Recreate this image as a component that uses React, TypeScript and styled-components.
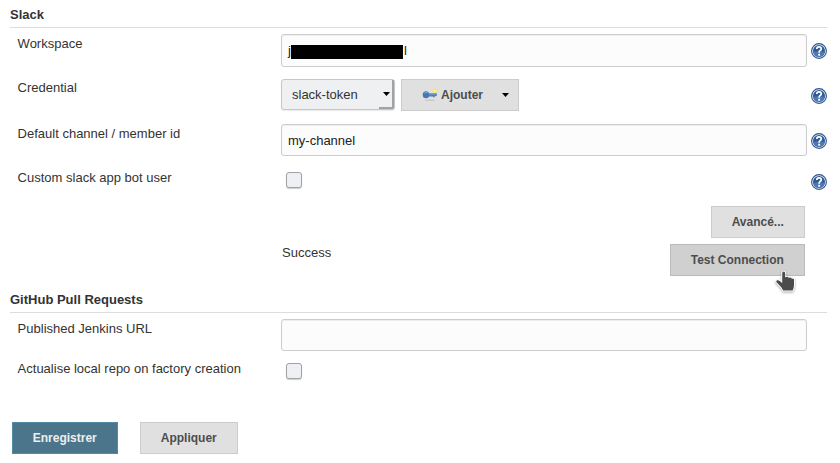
import React from 'react';
import styled, { createGlobalStyle } from 'styled-components';

const GlobalStyle = createGlobalStyle`
  * { box-sizing: border-box; }
  body {
    margin: 0;
    background: #fff;
    color: #333;
    font: 13px/16px "Liberation Sans", Arial, sans-serif;
  }
`;

const Page = styled.form`
  width: 840px;
  height: 463px;
  padding: 0 13px 0 10px;
  overflow: hidden;
`;

const Section = styled.fieldset<{ $height: number }>`
  margin: 0;
  padding: 0;
  border: 0;
  min-width: 0;
  height: ${(p) => p.$height}px;
`;

const SectionTitle = styled.h2`
  margin: 0 0 6px;
  height: 28px;
  padding-top: 7px;
  border-bottom: 1px solid #ddd;
  font-size: 13px;
  line-height: 16px;
  font-weight: bold;
`;

const Row = styled.div<{ $height: number }>`
  display: grid;
  grid-template-columns: 263px 526px 16px;
  column-gap: 0;
  align-items: start;
  padding-left: 8px;
  height: ${(p) => p.$height}px;
`;

const Label = styled.label<{ $drop?: number }>`
  padding-top: ${(p) => p.$drop ?? 1}px;
  margin-left: -0.4px;
`;

const InputBox = styled.div<{ $height?: number }>`
  display: flex;
  align-items: center;
  height: ${(p) => p.$height ?? 32}px;
  padding: 0 6px;
  border: 1px solid #ccc;
  border-radius: 3px;
  background: #fcfcfc;
  color: #222;
  box-shadow: inset 0 1px 1px rgba(0, 0, 0, 0.06);
`;

const TextInput = styled.input`
  width: 100%;
  padding: 2px 0 0;
  border: 0;
  outline: 0;
  background: transparent;
  color: #222;
  font: inherit;
`;

const Redacted = styled.span`
  width: 112px;
  height: 14px;
  margin: 2px 1px 0 0;
  background: #000;
`;

const Controls = styled.div`
  display: flex;
  align-items: flex-start;
  gap: 6px;
`;

const SelectBox = styled.div`
  display: flex;
  width: 114px;
  height: 31px;
  border: 1px solid #c4c6c8;
  border-radius: 3px;
  background: #eef0f2;
  box-shadow: 0 1px 1px rgba(0, 0, 0, 0.08);
`;

const SelectValue = styled.span`
  width: 97px;
  padding: 7px 0 0 10px;
`;

const SelectArrow = styled.span`
  display: flex;
  flex: 1;
  padding: 12px 0 0 4px;
  border-right: 2px solid #a0a3a5;
  border-bottom: 2px solid #a0a3a5;
  border-bottom-right-radius: 2px;
`;

const Button = styled.button<{ $width: number; $tone?: 'primary' | 'hover' }>`
  display: flex;
  align-items: center;
  justify-content: center;
  width: ${(p) => p.$width}px;
  height: 32px;
  padding: 0 0.5px 0 0;
  border: 1px solid ${(p) => (p.$tone === 'primary' ? '#5289a3' : p.$tone === 'hover' ? '#bbb' : '#ccc')};
  background: ${(p) => (p.$tone === 'primary' ? '#4b758b' : p.$tone === 'hover' ? '#d0d0d0' : '#e0e0e0')};
  color: ${(p) => (p.$tone === 'primary' ? '#eee' : '#4d4d4d')};
  font: bold 12px/16px "Liberation Sans", Arial, sans-serif;
`;

const MenuButton = styled(Button)`
  justify-content: flex-start;
  padding-left: 20px;
`;

const AddLabel = styled.span`
  margin: 0 19px 0 3px;
`;

const Checkbox = styled.span<{ $top: number }>`
  width: 16px;
  height: 16px;
  margin: ${(p) => p.$top}px 0 0 5px;
  border: 1px solid #a0a3a5;
  border-radius: 3px;
  background: #eef0f3;
  box-shadow: 0 1px 1px rgba(0, 0, 0, 0.2);
`;

const HelpLink = styled.span<{ $top?: number }>`
  display: block;
  height: 16px;
  margin: ${(p) => p.$top ?? 9}px 0 0 4px;
`;

const Actions = styled.div<{ $height: number }>`
  display: flex;
  justify-content: flex-end;
  height: ${(p) => p.$height}px;
  padding-right: 22px;
`;

const Status = styled.span`
  flex: 1;
  padding: 1px 0 0 272px;
`;

const PointerAnchor = styled.span`
  position: relative;
  height: 32px;
`;

const Pointer = styled.svg`
  position: absolute;
  left: 104px;
  top: 26px;
  filter: drop-shadow(0 1px 1px rgba(0, 0, 0, 0.35));
`;

const Footer = styled.footer`
  display: flex;
  gap: 22px;
  padding-left: 2px;
`;

const Caret = () => (
  <svg width="7" height="4" viewBox="0 0 7 4">
    <path d="M0 0H7L3.5 4Z" fill="#000" />
  </svg>
);

const Help = ({ top }: { top?: number }) => (
  <HelpLink $top={top}>
    <svg width="16" height="16" viewBox="0 0 16 16">
      <circle cx="8" cy="8" r="7.4" fill="#eef3f9" stroke="#2d5490" strokeWidth="1.1" />
      <circle cx="8" cy="8" r="6" fill="#2f5a99" />
      <path d="M2.1 9A6 6 0 0 0 13.9 9Q8 7.3 2.1 9Z" fill="#5078b0" />
      <path d="M5.8 6Q5.8 3.8 8 3.8T10.3 5.8Q10.3 6.9 9.1 7.6Q8.1 8.2 8.1 9.7" fill="none" stroke="#fff" strokeWidth="1.7" />
      <rect x="7.2" y="10.8" width="1.9" height="1.9" fill="#fff" />
    </svg>
  </HelpLink>
);

const KeyIcon = () => (
  <svg width="16" height="16" viewBox="0 0 16 16">
    <ellipse cx="8" cy="13.3" rx="5.5" ry="0.8" fill="#c8c8c8" />
    <path d="M6 6.2H14Q15.2 6.5 15 8L14 9.3H12.6V10.2H11V9.5H6Z" fill="#4d7fb8" />
    <ellipse cx="4" cy="7.8" rx="3.3" ry="3.5" fill="#4478b5" />
    <path d="M2.1 6.3Q3.5 4.7 5.7 5.9M7 7H13.6" fill="none" stroke="#82aad5" strokeWidth="1" />
    <path d="M12.5 0.9L13.4 2.3L15.3 2.1L14.5 3.8L15.3 5.5L13.4 5.1L12 6.3L11.5 4.6L10 3.7L11.7 2.8Z" fill="#f6e84d" />
    <circle cx="12.7" cy="3.8" r="0.9" fill="#fffbc5" />
  </svg>
);

const HandPointer = () => (
  <Pointer width="22" height="22" viewBox="0 0 22 22">
    <path
      d="M8.2 14V3.5Q8.2 1.6 9.7 1.6T11.2 3.5V7.2L13.8 6.8L14.6 7.7L16.8 7.5L17.6 8.6L20 8.9V15.2Q19.8 18 18.7 20.5H9.2Q7.9 17.4 4.7 14.6L2.3 12Q1.9 10.8 3.1 10.3Q4.3 9.9 6.1 11.3L8.2 13Z"
      fill="#4b4b4b"
      stroke="#fff"
      strokeWidth="1.8"
      paintOrder="stroke"
      strokeLinejoin="round"
    />
  </Pointer>
);

export default function App() {
  return (
    <>
      <GlobalStyle />
      <Page>
        <Section $height={285}>
          <SectionTitle>Slack</SectionTitle>
          <Row $height={45}>
            <Label $drop={2}>Workspace</Label>
            <InputBox $height={33}>j<Redacted />l</InputBox>
            <Help />
          </Row>
          <Row $height={45}>
            <Label>Credential</Label>
            <Controls>
              <SelectBox>
                <SelectValue>slack-token</SelectValue>
                <SelectArrow><Caret /></SelectArrow>
              </SelectBox>
              <MenuButton type="button" $width={118}>
                <KeyIcon />
                <AddLabel>Ajouter</AddLabel>
                <Caret />
              </MenuButton>
            </Controls>
            <Help />
          </Row>
          <Row $height={45}>
            <Label $drop={2} htmlFor="channel">Default channel / member id</Label>
            <InputBox><TextInput id="channel" defaultValue="my-channel" /></InputBox>
            <Help />
          </Row>
          <Row $height={37}>
            <Label>Custom slack app bot user</Label>
            <Checkbox $top={3} />
            <Help top={5} />
          </Row>
          <Actions $height={38}>
            <Button type="button" $width={94}>Avancé...</Button>
          </Actions>
          <Actions $height={41}>
            <Status>Success</Status>
            <PointerAnchor>
              <Button type="button" $width={135} $tone="hover">Test Connection</Button>
              <HandPointer />
            </PointerAnchor>
          </Actions>
        </Section>
        <Section $height={137}>
          <SectionTitle>GitHub Pull Requests</SectionTitle>
          <Row $height={41}>
            <Label $drop={2} htmlFor="url">Published Jenkins URL</Label>
            <InputBox><TextInput id="url" /></InputBox>
          </Row>
          <Row $height={30}>
            <Label>Actualise local repo on factory creation</Label>
            <Checkbox $top={3} />
          </Row>
        </Section>
        <Footer>
          <Button type="button" $width={106} $tone="primary">Enregistrer</Button>
          <Button type="button" $width={98}>Appliquer</Button>
        </Footer>
      </Page>
    </>
  );
}
